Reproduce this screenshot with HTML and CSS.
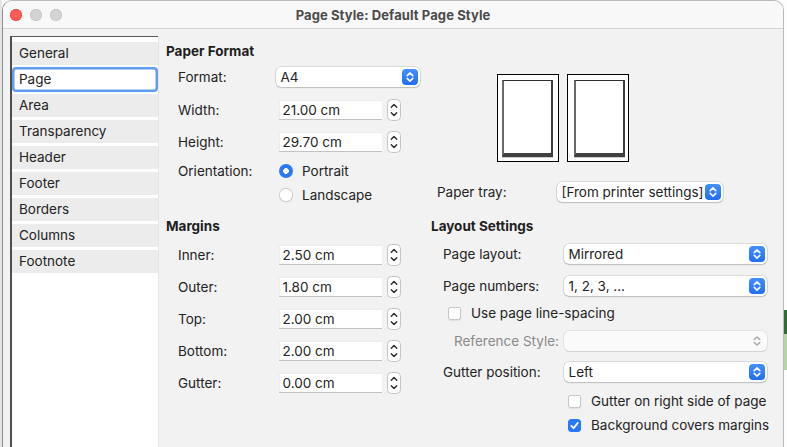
FILE: index.html
```html
<!DOCTYPE html>
<html>
<head>
<meta charset="utf-8">
<link rel="stylesheet" href="styles.css">
</head>
<body>
<div class="dialog">
  <div class="titlebar">
    <div class="lights"><span class="light red"></span><span class="light"></span><span class="light"></span></div>
    <div class="title">Page Style: Default Page Style</div>
    <div></div>
  </div>
  <div class="body">
    <ul class="tabs">
      <li>General</li>
      <li class="active">Page</li>
      <li>Area</li>
      <li>Transparency</li>
      <li>Header</li>
      <li>Footer</li>
      <li>Borders</li>
      <li>Columns</li>
      <li>Footnote</li>
    </ul>
    <div class="content">
      <section class="paper">
        <h2>Paper Format</h2>
        <div class="frow m6"><span class="lbl">Format:</span>
          <div class="popup w144"><span>A4</span><span class="pbtn"><svg viewBox="0 0 16 16" width="16" height="16"><path d="M5.2 6.6 8 3.9l2.8 2.7M5.2 9.4 8 12.1l2.8-2.7" fill="none" stroke="#fff" stroke-width="1.6" stroke-linecap="round" stroke-linejoin="round"/></svg></span></div>
        </div>
        <div class="frow m11"><span class="lbl">Width:</span><span class="field">21.00 cm</span><svg class="spin" viewBox="0 0 14 22" width="14" height="22"><rect x=".5" y=".5" width="13" height="21" rx="4" fill="#fff" stroke="#c4c4c4"/><path d="M4.3 8.2 7 5.5l2.7 2.7M4.3 13.8 7 16.5l2.7-2.7" fill="none" stroke="#2a2a2a" stroke-width="1.4" stroke-linecap="round" stroke-linejoin="round"/></svg></div>
        <div class="frow m10"><span class="lbl">Height:</span><span class="field">29.70 cm</span><svg class="spin" viewBox="0 0 14 22" width="14" height="22"><rect x=".5" y=".5" width="13" height="21" rx="4" fill="#fff" stroke="#c4c4c4"/><path d="M4.3 8.2 7 5.5l2.7 2.7M4.3 13.8 7 16.5l2.7-2.7" fill="none" stroke="#2a2a2a" stroke-width="1.4" stroke-linecap="round" stroke-linejoin="round"/></svg></div>
        <div class="frow m7"><span class="lbl">Orientation:</span><span class="radio on"></span><span class="rtext">Portrait</span></div>
        <div class="frow m2"><span class="lbl"></span><span class="radio"></span><span class="rtext">Landscape</span></div>
      </section>

      <section class="previewcol">
        <div class="preview">
          <div class="thumb left"><div class="sheet"></div></div>
          <div class="thumb right"><div class="sheet"></div></div>
        </div>
        <div class="trow"><span class="tlbl">Paper tray:</span>
          <div class="popup w166"><span>[From printer settings]</span><span class="pbtn"><svg viewBox="0 0 16 16" width="16" height="16"><path d="M5.2 6.6 8 3.9l2.8 2.7M5.2 9.4 8 12.1l2.8-2.7" fill="none" stroke="#fff" stroke-width="1.6" stroke-linecap="round" stroke-linejoin="round"/></svg></span></div>
        </div>
      </section>

      <section class="margins">
        <h2>Margins</h2>
        <div class="frow m9"><span class="lbl">Inner:</span><span class="field">2.50 cm</span><svg class="spin" viewBox="0 0 14 22" width="14" height="22"><rect x=".5" y=".5" width="13" height="21" rx="4" fill="#fff" stroke="#c4c4c4"/><path d="M4.3 8.2 7 5.5l2.7 2.7M4.3 13.8 7 16.5l2.7-2.7" fill="none" stroke="#2a2a2a" stroke-width="1.4" stroke-linecap="round" stroke-linejoin="round"/></svg></div>
        <div class="frow m10"><span class="lbl">Outer:</span><span class="field">1.80 cm</span><svg class="spin" viewBox="0 0 14 22" width="14" height="22"><rect x=".5" y=".5" width="13" height="21" rx="4" fill="#fff" stroke="#c4c4c4"/><path d="M4.3 8.2 7 5.5l2.7 2.7M4.3 13.8 7 16.5l2.7-2.7" fill="none" stroke="#2a2a2a" stroke-width="1.4" stroke-linecap="round" stroke-linejoin="round"/></svg></div>
        <div class="frow m10"><span class="lbl">Top:</span><span class="field">2.00 cm</span><svg class="spin" viewBox="0 0 14 22" width="14" height="22"><rect x=".5" y=".5" width="13" height="21" rx="4" fill="#fff" stroke="#c4c4c4"/><path d="M4.3 8.2 7 5.5l2.7 2.7M4.3 13.8 7 16.5l2.7-2.7" fill="none" stroke="#2a2a2a" stroke-width="1.4" stroke-linecap="round" stroke-linejoin="round"/></svg></div>
        <div class="frow m10"><span class="lbl">Bottom:</span><span class="field">2.00 cm</span><svg class="spin" viewBox="0 0 14 22" width="14" height="22"><rect x=".5" y=".5" width="13" height="21" rx="4" fill="#fff" stroke="#c4c4c4"/><path d="M4.3 8.2 7 5.5l2.7 2.7M4.3 13.8 7 16.5l2.7-2.7" fill="none" stroke="#2a2a2a" stroke-width="1.4" stroke-linecap="round" stroke-linejoin="round"/></svg></div>
        <div class="frow m10"><span class="lbl">Gutter:</span><span class="field">0.00 cm</span><svg class="spin" viewBox="0 0 14 22" width="14" height="22"><rect x=".5" y=".5" width="13" height="21" rx="4" fill="#fff" stroke="#c4c4c4"/><path d="M4.3 8.2 7 5.5l2.7 2.7M4.3 13.8 7 16.5l2.7-2.7" fill="none" stroke="#2a2a2a" stroke-width="1.4" stroke-linecap="round" stroke-linejoin="round"/></svg></div>
      </section>

      <section class="layout">
        <h2 class="hr">Layout Settings</h2>
        <div class="lrow m9"><span class="llbl">Page layout:</span>
          <div class="popup w203"><span>Mirrored</span><span class="pbtn"><svg viewBox="0 0 16 16" width="16" height="16"><path d="M5.2 6.6 8 3.9l2.8 2.7M5.2 9.4 8 12.1l2.8-2.7" fill="none" stroke="#fff" stroke-width="1.6" stroke-linecap="round" stroke-linejoin="round"/></svg></span></div>
        </div>
        <div class="lrow m12"><span class="llbl">Page numbers:</span>
          <div class="popup w203"><span>1, 2, 3, ...</span><span class="pbtn"><svg viewBox="0 0 16 16" width="16" height="16"><path d="M5.2 6.6 8 3.9l2.8 2.7M5.2 9.4 8 12.1l2.8-2.7" fill="none" stroke="#fff" stroke-width="1.6" stroke-linecap="round" stroke-linejoin="round"/></svg></span></div>
        </div>
        <div class="lrow m7 ind18"><span class="check"></span><span class="ctext">Use page line-spacing</span></div>
        <div class="lrow m8"><span class="llbl dim ind24">Reference Style:</span>
          <div class="popup w203 disabled"><span></span><span class="pbtn off"><svg viewBox="0 0 16 16" width="16" height="16"><path d="M5.2 6.6 8 3.9l2.8 2.7M5.2 9.4 8 12.1l2.8-2.7" fill="none" stroke="#a8a8a8" stroke-width="1.4" stroke-linecap="round" stroke-linejoin="round"/></svg></span></div>
        </div>
        <div class="lrow m11"><span class="llbl">Gutter position:</span>
          <div class="popup w203"><span>Left</span><span class="pbtn"><svg viewBox="0 0 16 16" width="16" height="16"><path d="M5.2 6.6 8 3.9l2.8 2.7M5.2 9.4 8 12.1l2.8-2.7" fill="none" stroke="#fff" stroke-width="1.6" stroke-linecap="round" stroke-linejoin="round"/></svg></span></div>
        </div>
        <div class="lrow m9 ind138"><span class="check"></span><span class="ctext">Gutter on right side of page</span></div>
        <div class="lrow m4 ind138"><span class="check on"><svg viewBox="0 0 13 13" width="13" height="13"><path d="M3.3 6.9 5.6 9.2 9.8 3.9" fill="none" stroke="#fff" stroke-width="1.8" stroke-linecap="round" stroke-linejoin="round"/></svg></span><span class="ctext">Background covers margins</span></div>
      </section>
    </div>
  </div>
</div>
<div class="behind"><span class="dark"></span><span class="pale"></span></div>
</body>
</html>
```

FILE: styles.css
```css
* { box-sizing: border-box; }
html, body { margin: 0; padding: 0; }
body {
  width: 787px;
  height: 447px;
  overflow: hidden;
  position: relative;
  background: linear-gradient(to right, #e4e4e4 0, #e4e4e4 2px, #fdfdfd 2px);
  font-family: Inter, "Liberation Sans", sans-serif;
  font-size: 13.5px;
  color: #232323;
}
.dialog {
  margin-left: 2px;
  width: 782px;
  height: 447px;
  background: #f2f2f2;
  border: 1px solid #b9b9b9;
  border-left-color: #8e8e8e;
  border-bottom: none;
  border-radius: 10px 10px 0 0;
  overflow: hidden;
  display: flex;
  flex-direction: column;
}
.titlebar {
  height: 28px;
  flex: none;
  background: #f8f8f8;
  border-bottom: 1px solid #d5d5d5;
  display: grid;
  grid-template-columns: 1fr auto 1fr;
  align-items: center;
}
.lights { display: flex; gap: 8px; padding-left: 7px; }
.light {
  width: 12px; height: 12px; border-radius: 50%;
  background: #d3d3d3;
  box-shadow: inset 0 0 0 0.5px #bdbdbd;
}
.light.red { background: #fd5c55; box-shadow: inset 0 0 0 0.5px #e0443e; }
.title {
  font-weight: 700;
  font-size: 13px;
  color: #4b4b4b;
  letter-spacing: 0.1px;
}
.body { flex: 1; display: flex; min-height: 0; }
.tabs {
  list-style: none;
  margin: 7px 0 0 7px;
  padding: 5px 0 0 0;
  width: 148px;
  background: #fff;
  border-left: 2px solid #4e4e4e;
  border-top: 1px solid #5a5a5a;
  box-shadow: 1px 0 0 #e6e6e6;
  overflow: hidden;
}
.tabs li {
  height: 23px;
  line-height: 23px;
  margin-bottom: 3px;
  padding-left: 7px;
  background: #ececec;
  white-space: nowrap;
}
.tabs li.active {
  background: #fff;
  height: 25px;
  line-height: 25px;
  margin-top: -1px;
  margin-bottom: 2px;
  border-radius: 4px;
  box-shadow: inset 0 0 0 2.5px #5f9df5;
}
.content {
  flex: 1;
  padding: 14px 0 0 8px;
  display: grid;
  grid-template-columns: 264px 337px;
  grid-template-rows: 175px auto;
  align-content: start;
}
h2 {
  margin: 0;
  font-size: 13.5px;
  line-height: 17px;
  font-weight: 700;
  color: #1e1e1e;
}
h2.hr { padding-left: 1px; }
.frow { display: flex; align-items: center; height: 22px; }
.lbl { width: 110px; padding-left: 12px; flex: none; }
.m2 { margin-top: 2px; }
.m4 { margin-top: 4px; }
.m6 { margin-top: 6px; }
.m7 { margin-top: 7px; }
.m8 { margin-top: 8px; }
.m9 { margin-top: 9px; }
.m10 { margin-top: 10px; }
.m11 { margin-top: 11px; }
.m12 { margin-top: 12px; }
.popup {
  height: 20px;
  background: #fff;
  border-radius: 5px;
  box-shadow: 0 0 0 0.5px rgba(0,0,0,0.2), 0 1px 1.5px rgba(0,0,0,0.14);
  display: flex;
  align-items: center;
  justify-content: space-between;
  padding-left: 4.5px;
  flex: none;
  white-space: nowrap;
}
.w144 { width: 144px; }
.w166 { width: 166px; }
.w203 { width: 203px; }
.pbtn {
  width: 16px; height: 16px;
  margin-right: 2px;
  border-radius: 4px;
  background: linear-gradient(#4390fb, #1f6ef2);
  display: flex;
}
.pbtn.off { background: none; }
.popup.disabled { background: #fafafa; box-shadow: 0 0 0 0.5px rgba(0,0,0,0.1), 0 0.5px 1px rgba(0,0,0,0.08); }
.field {
  width: 103px;
  height: 20px;
  margin-left: 3px;
  padding-left: 3.5px;
  line-height: 20px;
  background: #fff;
  box-shadow: inset 0 -1px 0 #c3c3c3, inset 1px 0 0 #ececec, inset 0 1px 0 #eeeeee;
  flex: none;
}
.spin { margin-left: 5px; flex: none; display: block; }
.radio {
  width: 14px; height: 14px;
  margin-left: 3px;
  border-radius: 50%;
  background: #fff;
  box-shadow: inset 0 0 0 0.8px #c2c2c2, 0 0.5px 1px rgba(0,0,0,0.08);
  flex: none;
  position: relative;
}
.radio.on {
  background: radial-gradient(circle, #fff 0, #fff 2.6px, #2a78f5 3.1px);
  box-shadow: none;
}
.rtext { margin-left: 9px; }
.previewcol { display: flex; flex-direction: column; }
.preview { display: flex; gap: 8px; margin: 31px 0 0 67px; }
.thumb {
  width: 62px; height: 88px;
  border: 1px solid #000;
  background: #fff;
}
.thumb.left { padding: 5px 5px 4px 4px; }
.thumb.right { padding: 5px 3px 4px 6px; }
.sheet {
  height: 100%;
  background: #fff;
  border: 2px solid #3d3d3d;
  border-left-color: #6a6a6a;
  border-top-width: 1px;
  border-top-color: #2e2e2e;
  border-bottom: 4px solid #404040;
  box-shadow: 0 1px 0 #cfcfcf;
}
.trow { display: flex; align-items: center; height: 20px; margin-top: 20px; }
.tlbl { width: 127px; padding-left: 7px; flex: none; }
.lrow { display: flex; align-items: center; height: 20px; }
.llbl { width: 134px; padding-left: 13px; flex: none; white-space: nowrap; }
.llbl.dim { color: #8a8a8a; }
.llbl.ind24 { padding-left: 24px; }
.ind18 { padding-left: 18px; }
.ind138 { padding-left: 138px; }
.check {
  width: 13px; height: 13px;
  border-radius: 3.5px;
  background: #fff;
  box-shadow: inset 0 0 0 0.8px #b9b9b9, 0 0.5px 1px rgba(0,0,0,0.08);
  flex: none;
  display: flex;
}
.check.on { background: #2a78f5; box-shadow: none; }
.ctext { margin-left: 10px; white-space: nowrap; }
.behind {
  position: absolute;
  left: 784px;
  top: 310px;
  width: 3px;
  display: flex;
  flex-direction: column;
}
.behind .dark { height: 24px; background: #2f6b36; }
.behind .pale { height: 36px; background: #b7d3a8; }
```
